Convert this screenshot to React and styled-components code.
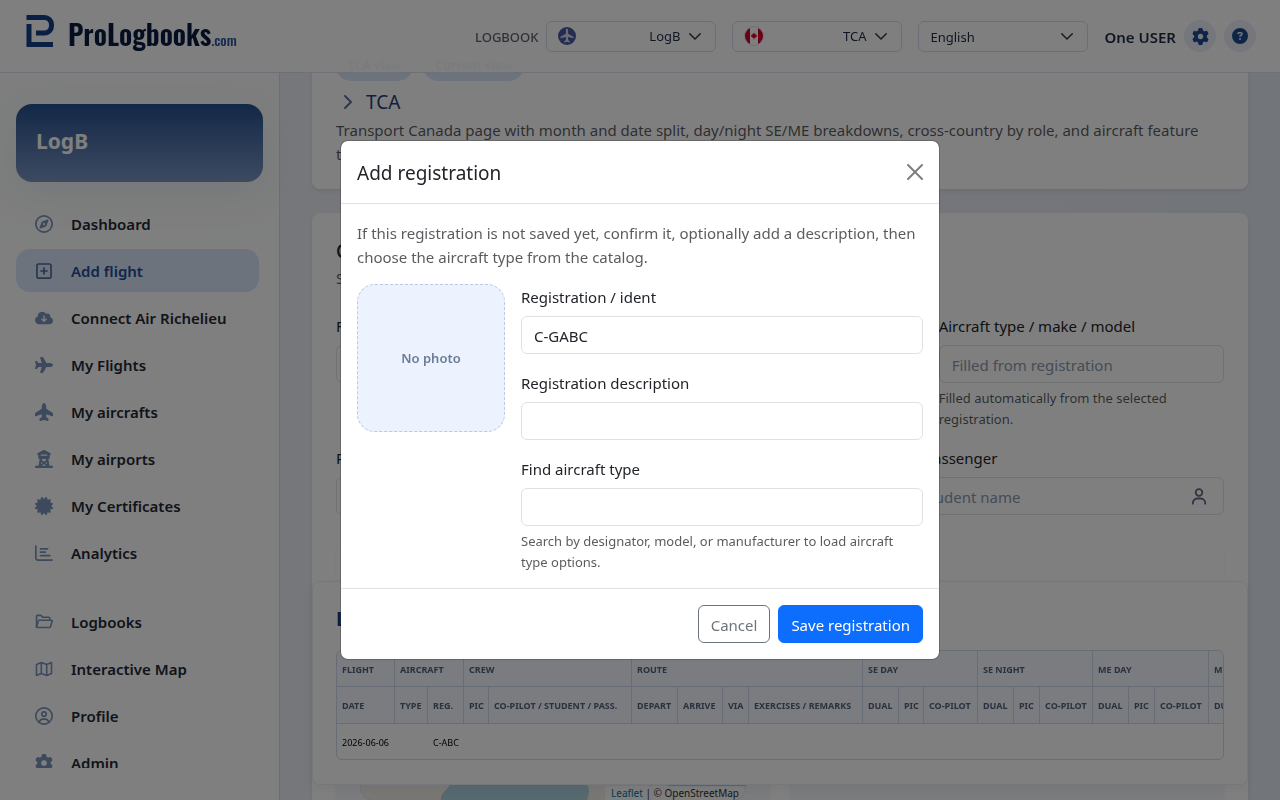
import React, { useState } from "react";
import styled, { createGlobalStyle } from "styled-components";
import {
    FaRegCompass, FaRegSquarePlus, FaCloudArrowDown, FaPlane, FaPlaneUp, FaTowerObservation,
    FaCertificate, FaRegChartBar, FaRegCircleUser, FaGear, FaCircleQuestion, FaChevronRight
} from "react-icons/fa6";


const FolderIcon = () => (
    <svg width="18" height="18" viewBox="0 0 18 18" fill="none" stroke="currentColor" strokeWidth="1.6" strokeLinejoin="round" strokeLinecap="round">
        <path d="M1.5 14V3.3c0-.5.4-.9.9-.9h3.4l2 1.8h6c.6 0 1 .4 1 1v1" />
        <path d="m1.5 14 1.9-6.200c.1-.4.5-.6.9-.6h12.100c.5 0 .9.5.7 1l-1.700 5.700c-.1.4-.5.6-.9.6H2.200c-.4 0-.7-.2-.7-.5z" />
    </svg>
);

const MapIcon = () => (
    <svg width="18" height="18" viewBox="0 0 18 18" fill="none" stroke="currentColor" strokeWidth="1.6" strokeLinejoin="round">
        <path d="M1.5 4.400 6.300 2.500l5.400 2 4.800-1.900v11L11.700 15.500l-5.400-2-4.800 1.900zM6.300 2.500v11M11.700 4.500v11" />
    </svg>
);

const PersonIcon = () => (
    <svg width="16" height="17" viewBox="0 0 16 17" fill="none" stroke="#5a6b82" strokeWidth="1.8" strokeLinecap="round">
        <circle cx="8" cy="4.5" r="3.3" />
        <path d="M1.8 15.700v-.7a4.500 4.500 0 0 1 4.500-4.500h3.400a4.500 4.500 0 0 1 4.500 4.500v.7" />
    </svg>
);

const Chevron = () => (
    <svg width="12" height="12" viewBox="0 0 16 16" fill="none" stroke="#343a40" strokeWidth="2" strokeLinecap="round" strokeLinejoin="round">
        <path d="m1 5 7 7 7-7" />
    </svg>
);

const PlaneBadge = () => (
    <svg width="18" height="18" viewBox="0 0 18 18">
        <circle cx="9" cy="9" r="9" fill="#4a59a4" />
        <path d="M9 1.600c.8 0 1.100 1 1.100 2v3.200l5.400 3v1.500l-5.400-1.400v3.200l1.800 1.300v1L9 14.800l-2.900.6v-1l1.800-1.300V9.900l-5.400 1.400V9.800l5.400-3V3.600c0-1 .3-2 1.100-2z" fill="#d5d9ea" />
    </svg>
);

const CanadaFlag = () => (
    <svg width="20" height="20" viewBox="0 0 20 20">
        <defs><clipPath id="flag"><circle cx="10" cy="10" r="9" /></clipPath></defs>
        <circle cx="10" cy="10" r="9.5" fill="#fff" stroke="#dcdfe8" />
        <g clipPath="url(#flag)" fill="#d80027">
            <path d="M0 0h6v20H0zM14 0h6v20h-6z" />
            <path d="m10 6.500.8 1.500.9-.3-.2 1.600 1.500-.6-.3 1 .6.4-2 1.500.1.7-1.100-.2v1.500h-.6v-1.500l-1.100.2.1-.7-2-1.500.6-.4-.3-1 1.500.6-.2-1.600.9.3z" />
        </g>
    </svg>
);

const LogoMark = () => (
    <svg width="28" height="34" viewBox="0 0 28 34" fill="none" stroke="#153f88" strokeWidth="5">
        <path d="M.5 4.500H18.500a7 7 0 0 1 7 7V13a7 7 0 0 1-7 7H10" />
        <path d="M3 11v20.500h24" />
    </svg>
);


const mainMenu = [
    { label: "Dashboard", icon: FaRegCompass },
    { label: "Add flight", icon: FaRegSquarePlus, active: true },
    { label: "Connect Air Richelieu", icon: FaCloudArrowDown },
    { label: "My Flights", icon: FaPlane },
    { label: "My aircrafts", icon: FaPlaneUp },
    { label: "My airports", icon: FaTowerObservation },
    { label: "My Certificates", icon: FaCertificate },
    { label: "Analytics", icon: FaRegChartBar },
];

const accountMenu = [
    { label: "Logbooks", icon: FolderIcon },
    { label: "Interactive Map", icon: MapIcon },
    { label: "Profile", icon: FaRegCircleUser },
    { label: "Admin", icon: FaGear },
];

const groups = [
    { title: "Flight", columns: [["Date", 58]] },
    { title: "Aircraft", columns: [["Type", 33], ["Reg.", 36]] },
    { title: "Crew", columns: [["PIC", 25], ["Co-pilot / Student / Pass.", 143]] },
    { title: "Route", columns: [["Depart", 46], ["Arrive", 45], ["Via", 26], ["Exercises / Remarks", 114]] },
    { title: "SE Day", columns: [["Dual", 36], ["PIC", 25], ["Co-pilot", 54]] },
    { title: "SE Night", columns: [["Dual", 36], ["PIC", 26], ["Co-pilot", 53]] },
    { title: "ME Day", columns: [["Dual", 36], ["PIC", 26], ["Co-pilot", 54]] },
    { title: "ME Night", columns: [["Dual", 36], ["PIC", 26], ["Co-pilot", 54]] },
];

const columns = groups.flatMap((group) => group.columns);
const tableWidth = columns.reduce((sum, column) => sum + column[1], 0);


const MenuList = ({ items }) => (
    <MenuGroup>
        {items.map(({ label, icon: Icon, active }) => (
            <li key={label}>
                <MenuLink href="#" $active={active} aria-current={active ? "page" : undefined}>
                    <Icon size={18} />
                    <span>{label}</span>
                </MenuLink>
            </li>
        ))}
    </MenuGroup>
);

const Field = ({ id, label, help, children, ...rest }) => (
    <FieldWrap>
        <label htmlFor={id}>{label}</label>
        <InputWrap>
            <Input id={id} type="text" {...rest} />
            {children}
        </InputWrap>
        {help && <Help>{help}</Help>}
    </FieldWrap>
);


const LogTable = () => (
    <TableScroll>
        <Table style={{ width: tableWidth }}>
            <colgroup>
                {columns.map((column, index) => <col key={index} style={{ width: column[1] }} />)}
            </colgroup>
            <thead>
                <tr>
                    {groups.map((group) => <th key={group.title} colSpan={group.columns.length}>{group.title}</th>)}
                </tr>
                <tr>
                    {columns.map((column, index) => <th key={index}>{column[0]}</th>)}
                </tr>
            </thead>
            <tbody>
                <tr>
                    {columns.map((column, index) => (
                        <td key={index}>{column[0] === "Date" ? "2026-06-06" : column[0] === "Reg." ? "C-ABC" : ""}</td>
                    ))}
                </tr>
            </tbody>
        </Table>
    </TableScroll>
);


const RegistrationDialog = ({ onClose }) => {
    const [ident, setIdent] = useState("C-GABC");
    const [description, setDescription] = useState("");
    const [search, setSearch] = useState("");

    return (
        <Backdrop>
            <Dialog role="dialog" aria-modal="true" aria-labelledby="dialog-title">
                <DialogHeader>
                    <h5 id="dialog-title">Add registration</h5>
                    <CloseButton type="button" aria-label="Close" onClick={onClose}>
                        <svg width="16" height="16" viewBox="0 0 16 16" stroke="#000" strokeWidth="2" strokeLinecap="round">
                            <path d="m1 1 14 14M15 1 1 15" />
                        </svg>
                    </CloseButton>
                </DialogHeader>
                <DialogBody>
                    <Muted>If this registration is not saved yet, confirm it, optionally add a description, then choose the aircraft type from the catalog.</Muted>
                    <DialogColumns>
                        <Photo>No photo</Photo>
                        <FieldStack>
                            <Field id="ident" label="Registration / ident" value={ident} onChange={(e) => setIdent(e.target.value)} />
                            <Field id="description" label="Registration description" value={description} onChange={(e) => setDescription(e.target.value)} />
                            <Field
                                id="find-type"
                                label="Find aircraft type"
                                value={search}
                                onChange={(e) => setSearch(e.target.value)}
                                help="Search by designator, model, or manufacturer to load aircraft type options."
                            />
                        </FieldStack>
                    </DialogColumns>
                </DialogBody>
                <DialogFooter>
                    <Button type="button" onClick={onClose}>Cancel</Button>
                    <Button type="button" $primary>Save registration</Button>
                </DialogFooter>
            </Dialog>
        </Backdrop>
    );
};


const App = () => {
    const [open, setOpen] = useState(true);

    return (
        <>
            <GlobalStyle />
            <Header>
                <Logo href="#">
                    <LogoMark />
                    <LogoText>ProLogbooks<small>.com</small></LogoText>
                </Logo>
                <Tools>
                    <ToolLabel>LOGBOOK</ToolLabel>
                    <Picker type="button"><PlaneBadge /><span>LogB</span><Chevron /></Picker>
                    <Picker type="button"><CanadaFlag /><span>TCA</span><Chevron /></Picker>
                    <SelectWrap>
                        <select aria-label="Language" defaultValue="English">
                            <option>English</option>
                            <option>Français</option>
                        </select>
                        <Chevron />
                    </SelectWrap>
                    <UserName>One USER</UserName>
                    <RoundButton type="button" aria-label="Settings"><FaGear size={17} /></RoundButton>
                    <RoundButton type="button" aria-label="Help"><FaCircleQuestion size={16} /></RoundButton>
                </Tools>
            </Header>

            <Sidebar>
                <BookCard>LogB</BookCard>
                <Menu>
                    <MenuList items={mainMenu} />
                    <MenuList items={accountMenu} />
                </Menu>
            </Sidebar>

            <Main>
                <IntroCard>
                    <Pills>
                        <Pill>TCA view</Pill>
                        <Pill>Current view</Pill>
                    </Pills>
                    <ViewTitle><FaChevronRight size={16} />TCA</ViewTitle>
                    <Muted>Transport Canada page with month and date split, day/night SE/ME breakdowns, cross-country by role, and aircraft feature totals.</Muted>
                </IntroCard>

                <FormCard>
                    <CardTitle>Crew</CardTitle>
                    <Muted>Select crew</Muted>
                    <FormRow $columns={3}>
                        <Field id="flight-date" label="Flight date" />
                        <Field id="registration" label="Registration" />
                        <Field id="aircraft-type" label="Aircraft type / make / model" placeholder="Filled from registration" help="Filled automatically from the selected registration." />
                    </FormRow>
                    <FormRow $columns={2}>
                        <Field id="pic" label="PIC" />
                        <Field id="copilot" label="Co-pilot / student / passenger" placeholder="Select co-pilot or student name">
                            <PersonIcon />
                        </Field>
                    </FormRow>
                    <Panels>
                        <Panel>
                            <RouteMap>
                                <svg width="100%" height="232" viewBox="0 0 384 232" preserveAspectRatio="none">
                                    <path d="M0 0h384v232H0z" fill="#f2efe9" />
                                    <path d="M80 232c-1-8 8-10 10-18V180h134v34c6 6 4 12 2 18zM305 180h79v39h-77z" fill="#aad3df" />
                                    <path d="m289 180 1 52" fill="none" stroke="#c5dbe4" />
                                </svg>
                                <Attribution><a href="#">Leaflet</a> | © OpenStreetMap</Attribution>
                            </RouteMap>
                        </Panel>
                        <Panel />
                    </Panels>
                </FormCard>

                <PreviewCard>
                    <PreviewTitle>Logbook preview</PreviewTitle>
                    <LogTable />
                </PreviewCard>
            </Main>

            {open && <RegistrationDialog onClose={() => setOpen(false)} />}
        </>
    );
};


const GlobalStyle = createGlobalStyle`
* { box-sizing: border-box; }
body {
    margin: 0;
    font-family: "Noto Sans", sans-serif;
    font-size: 15px;
    line-height: 24px;
    color: #212529;
    background: #eaeef7;
    overflow: hidden;
}
button, input, select { font: inherit; color: inherit; margin: 0; }
h2, h3, h5, p, ul { margin: 0; padding: 0; font-weight: 400; }
li { list-style: none; }
svg { flex: none; }
`;

const Header = styled.header`
position: fixed;
top: 0;
left: 0;
right: 0;
z-index: 10;
display: flex;
align-items: center;
justify-content: space-between;
height: 73px;
padding: 0 24px;
background: rgba(255, 255, 255, 0.96);
border-bottom: 1px solid #dbe1ee;
`;

const Logo = styled.a`
display: flex;
align-items: flex-start;
gap: 14px;
padding-left: 2px;
text-decoration: none;
color: #0a1a40;
`;

const LogoText = styled.span`
padding-top: 1px;
font-family: Oswald, "Roboto Condensed", "Liberation Sans", sans-serif;
font-size: 28px;
font-weight: 600;
line-height: 40px;
small {
    font-size: 14px;
    font-weight: 500;
    color: #2b56a0;
}
`;

const Tools = styled.div`
display: flex;
align-items: center;
gap: 16px;
`;

const ToolLabel = styled.span`
padding-top: 1px;
font-size: 13px;
font-weight: 500;
color: #5f6672;
margin-right: -8px;
`;

const Picker = styled.button`
display: flex;
align-items: center;
gap: 9px;
width: 170px;
height: 31px;
padding: 0 14px 0 11px;
border: 1px solid #d3ddee;
border-radius: 6px;
background: transparent;
font-size: 13px;
line-height: 21px;
color: #1f2d45;
span {
    flex: 1;
    padding-top: 1px;
    text-align: right;
}
`;

const SelectWrap = styled.div`
display: grid;
align-items: center;
width: 170px;
select, svg { grid-area: 1 / 1; }
select {
    appearance: none;
    height: 31px;
    padding: 1px 11px 0;
    border: 1px solid #d3ddee;
    border-radius: 6px;
    background: transparent;
    font-size: 13px;
    color: #1f2d45;
}
svg {
    justify-self: end;
    margin-right: 15px;
    pointer-events: none;
}
`;

const UserName = styled.span`
padding-top: 1px;
font-weight: 600;
color: #1f2d45;
margin-right: -8px;
`;

const RoundButton = styled.button`
display: grid;
place-items: center;
width: 32px;
height: 32px;
padding: 0;
border: 0;
border-radius: 50%;
background: #eceff8;
color: #1f4b90;
& + & { margin-left: -8px; }
`;

const Sidebar = styled.aside`
position: fixed;
top: 73px;
bottom: 0;
left: 0;
display: flex;
flex-direction: column;
gap: 20px;
width: 280px;
padding: 31px 16px 32px;
background: linear-gradient(#fafcfb, #fff 30%);
border-right: 1px solid #d5dfee;
`;

const BookCard = styled.div`
flex: none;
padding: 21px 20px 25px;
border-radius: 16px;
background: linear-gradient(#26508f, #7a96c2);
box-shadow: 0 14px 40px rgba(40, 60, 100, 0.08);
color: #fff;
font-size: 21px;
font-weight: 700;
line-height: 32px;
`;

const Menu = styled.nav`
flex: 1;
display: flex;
flex-direction: column;
gap: 26px;
min-height: 0;
padding-right: 4px;
overflow: hidden;
`;

const MenuGroup = styled.ul`
display: flex;
flex-direction: column;
gap: 4px;
`;

const MenuLink = styled.a`
display: flex;
align-items: center;
gap: 18px;
height: 43px;
padding: 0 19px;
border-radius: 14px;
text-decoration: none;
font-weight: 600;
background: ${(props) => props.$active ? "#d8e6fb" : "transparent"};
color: ${(props) => props.$active ? "#234c98" : "#1f2937"};
svg { color: ${(props) => props.$active ? "#4f6c9e" : "#7a92b8"}; }
span { padding-top: 1px; }
`;

const Main = styled.main`
height: 100vh;
margin-left: 280px;
padding: 0 32px;
overflow: hidden;
background: linear-gradient(90deg, #eceff5, #e5eaf4);
`;

const Card = styled.section`
padding: 24px;
border-radius: 8px;
background: #fff;
box-shadow: 0 2px 4px rgba(0, 0, 0, 0.08);
`;

const IntroCard = styled(Card)`
padding-top: 51px;
padding-bottom: 23px;
margin-bottom: 24px;
`;

const Pills = styled.div`
display: flex;
gap: 10px;
margin-bottom: 6px;
`;

const Pill = styled.span`
padding: 4px 12px;
border-radius: 15px;
background: #d8e6fb;
color: #1c458e;
font-size: 12px;
font-weight: 700;
line-height: 22px;
`;

const ViewTitle = styled.h2`
display: flex;
align-items: center;
gap: 11px;
padding-left: 3px;
font-size: 19px;
line-height: 30px;
color: #1d437f;
svg { color: #5a7299; }
`;

const Muted = styled.p`
padding-top: 1px;
color: rgba(33, 37, 41, 0.75);
`;

const FormCard = styled(Card)`
height: 900px;
margin-bottom: 24px;
`;

const CardTitle = styled.h3`
font-size: 19px;
font-weight: 500;
line-height: 28px;
`;

const FormRow = styled.div`
display: grid;
grid-template-columns: repeat(${(props) => props.$columns}, 1fr);
gap: 16px;
margin-top: ${(props) => props.$columns === 3 ? "23px" : "16px"};
`;

const FieldWrap = styled.div`
label {
    display: block;
    padding-top: 1px;
    margin-bottom: 7px;
}
`;

const InputWrap = styled.div`
display: grid;
align-items: center;
input, svg { grid-area: 1 / 1; }
svg {
    justify-self: end;
    margin-right: 17px;
}
`;

const Input = styled.input`
width: 100%;
height: 38px;
padding: 7px 12px 5px;
border: 1px solid #dee2e6;
border-radius: 6px;
background: #fff;
color: #212529;
&::placeholder { color: #8c98ab; }
`;

const Help = styled.div`
padding-top: 5px;
margin-bottom: -1px;
font-size: 13px;
line-height: 21px;
color: rgba(33, 37, 41, 0.75);
`;

const Panels = styled.div`
display: grid;
grid-template-columns: 1fr 1fr;
gap: 20px;
margin-top: 28px;
`;

const Panel = styled.div`
min-height: 300px;
padding: 24px;
border-radius: 8px;
background: linear-gradient(#fff, #f3f5fa);
box-shadow: 0 1px 3px rgba(0, 0, 0, 0.05);
`;

const RouteMap = styled.div`
position: relative;
overflow: hidden;
border: 1px solid #d3ddee;
border-radius: 14px;
svg { display: block; }
`;

const Attribution = styled.div`
position: absolute;
right: 0;
bottom: 0;
padding: 0 6px;
background: rgba(255, 255, 255, 0.8);
font-size: 10px;
line-height: 14px;
color: #333;
a {
    color: #0078a8;
    text-decoration: none;
}
`;

const PreviewCard = styled(Card)`
position: sticky;
bottom: 15px;
padding: 24px 23px;
border: 1px solid #ebeef5;
box-shadow: 0 4px 10px rgba(30, 50, 90, 0.06);
`;

const PreviewTitle = styled.h3`
padding-top: 1px;
margin-bottom: 19px;
font-size: 20px;
font-weight: 700;
line-height: 24px;
color: #163f88;
`;

const TableScroll = styled.div`
overflow: hidden;
border: 1px solid #cfdaec;
border-radius: 6px;
`;

const Table = styled.table`
table-layout: fixed;
border-collapse: separate;
border-spacing: 0;
white-space: nowrap;
line-height: 15px;
th, td {
    height: 35px;
    padding: 1px 0 0 5px;
    text-align: left;
}
th {
    height: 37px;
    background: #f5f8fe;
    border-right: 1px solid #cfdaec;
    border-bottom: 1px solid #cfdaec;
    font-size: 9px;
    font-weight: 700;
    text-transform: uppercase;
    color: #55657f;
}
tr:first-child th { height: 36px; }
td {
    font-size: 9px;
    color: #000;
}
`;

const Backdrop = styled.div`
position: fixed;
inset: 0;
z-index: 20;
display: grid;
place-items: center;
background: rgba(0, 0, 0, 0.5);
`;

const Dialog = styled.div`
width: 600px;
max-width: 100%;
border: 1px solid rgba(0, 0, 0, 0.18);
border-radius: 8px;
background: #fff;
background-clip: padding-box;
`;

const DialogHeader = styled.div`
display: flex;
align-items: center;
justify-content: space-between;
padding: 16px;
border-bottom: 1px solid #dee2e6;
h5 {
    padding-top: 2px;
    font-size: 19px;
    line-height: 28px;
}
`;

const CloseButton = styled.button`
display: grid;
padding: 0;
border: 0;
background: none;
opacity: 0.5;
`;

const DialogBody = styled.div`
padding: 16px;
`;

const DialogColumns = styled.div`
display: flex;
align-items: flex-start;
gap: 16px;
margin-top: 15px;
`;

const Photo = styled.div`
flex: none;
display: grid;
place-items: center;
width: 148px;
height: 148px;
border: 1px dashed #b9c9e6;
border-radius: 18px;
background: #ecf3fe;
color: #6b7c98;
font-size: 13px;
font-weight: 600;
`;

const FieldStack = styled.div`
flex: 1;
display: flex;
flex-direction: column;
gap: 16px;
`;

const DialogFooter = styled.div`
display: flex;
justify-content: flex-end;
gap: 8px;
padding: 16px;
border-top: 1px solid #dee2e6;
`;

const Button = styled.button`
padding: 7px 12px 5px;
border: 1px solid ${(props) => props.$primary ? "#0d6efd" : "#6c757d"};
border-radius: 6px;
background: ${(props) => props.$primary ? "#0d6efd" : "#fff"};
color: ${(props) => props.$primary ? "#fff" : "#6c757d"};
`;


export default App;
